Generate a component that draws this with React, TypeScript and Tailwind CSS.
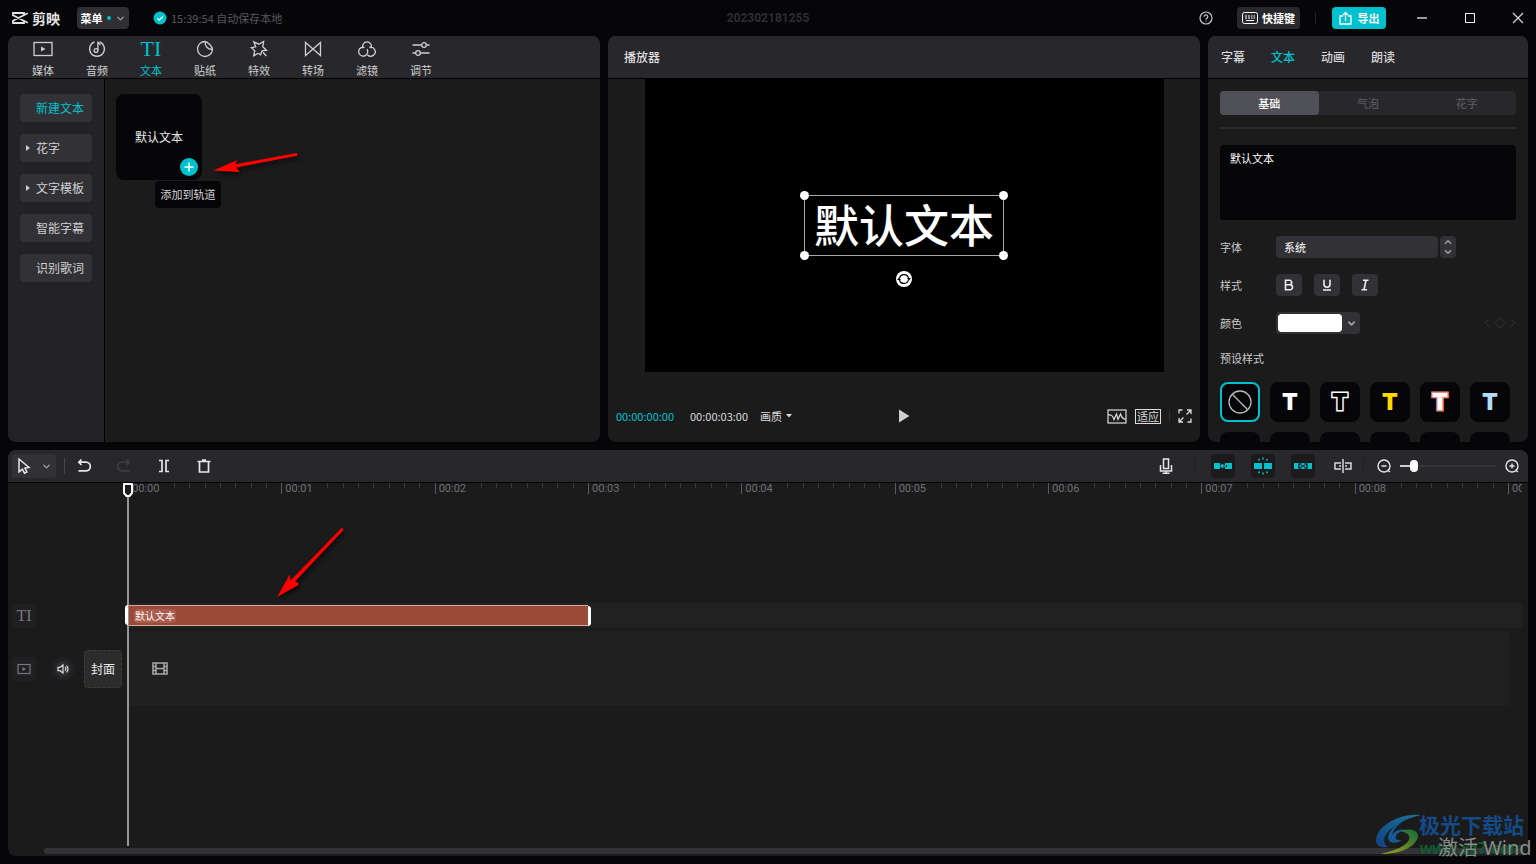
import React from 'react';
import { ChevronDown, ChevronUp } from 'lucide-react';

type IconProps = { w?: number; h?: number; box?: string; sw?: number; children: React.ReactNode };

const Icon: React.FC<IconProps> = ({ w = 18, h = 18, box, sw = 1.3, children }) => (
  <svg
    width={w}
    height={h}
    viewBox={box ?? `0 0 ${w} ${h}`}
    fill="none"
    stroke="currentColor"
    strokeWidth={sw}
    aria-hidden="true"
    className="shrink-0"
  >
    {children}
  </svg>
);

const MediaIcon = () => (
  <Icon w={20} h={18}>
    <rect x="1" y="2.5" width="18" height="13" />
    <path d="M8 6.500v5l4.500-2.500z" fill="currentColor" stroke="none" />
  </Icon>
);

const AudioIcon = () => (
  <Icon>
    <path d="M11.500 1.900A7.400 7.400 0 1 1 6.500 1.900" />
    <circle cx="8" cy="10.500" r="1.900" />
    <path d="M9.900 10.500V1.500c.2 1.700 1 2.600 2.700 3" />
  </Icon>
);

const StickerIcon = () => (
  <Icon>
    <path d="M9 1.500A7.500 7.500 0 1 0 16.500 9.500" />
    <path d="M9 1.500c0 4.800 2.200 7.600 7.500 8" />
    <path d="M9 1.500c2.500.3 7 4.500 7.500 8" />
  </Icon>
);

const EffectIcon = () => (
  <Icon>
    <path d="M8 13.200L3.800 15.800 4.700 10.800 1.300 7.600 5.700 6.800 3.800 1.800 8.800 4.200 13.600 1.500 12.800 6.800 16.500 10.200 12 10.800 10.600 14.800 8 13.200M13 12.300l3.300 3.700" />
  </Icon>
);

const TransitionIcon = () => (
  <Icon>
    <path d="M1.500 2.500v13L9 9 1.500 2.500zM16.500 2.500v13L9 9l7.500-6.500z" />
  </Icon>
);

const FilterIcon = () => (
  <Icon>
    <path d="M5.200 8.200A4.300 4.300 0 1 1 12.800 8.200M6.500 7.300a4.500 4.500 0 1 0 3 5.600c.4-1.500.2-2.600-.5-3.700" />
    <path d="M11.300 7.400a4.500 4.500 0 1 1-1.900 7.300" />
  </Icon>
);

const AdjustIcon = () => (
  <Icon>
    <path d="M.5 5h9.200M14.300 5h3.200M.5 13h3.200M8.300 13h9.200" />
    <circle cx="12" cy="5" r="2.300" />
    <circle cx="6" cy="13" r="2.300" />
  </Icon>
);

const TextGlyph = () => <span className="font-['Liberation_Serif',serif] text-[22px] leading-[18px]">TI</span>;

const TABS = [
  { label: '媒体', icon: <MediaIcon /> },
  { label: '音频', icon: <AudioIcon /> },
  { label: '文本', icon: <TextGlyph />, active: true },
  { label: '贴纸', icon: <StickerIcon /> },
  { label: '特效', icon: <EffectIcon /> },
  { label: '转场', icon: <TransitionIcon /> },
  { label: '滤镜', icon: <FilterIcon /> },
  { label: '调节', icon: <AdjustIcon /> },
];

const CATEGORIES = [
  { label: '新建文本', active: true },
  { label: '花字', expandable: true },
  { label: '文字模板', expandable: true },
  { label: '智能字幕' },
  { label: '识别歌词' },
];

const PRESETS = [
  { name: '白色', style: 'text-white' },
  { name: '描边', style: 'text-black [-webkit-text-stroke:3px_#fff] [paint-order:stroke_fill]' },
  { name: '黄色', style: 'text-[#ffd900]' },
  { name: '粉色描边', style: 'text-white [-webkit-text-stroke:3px_#f08880] [paint-order:stroke_fill]' },
  { name: '浅蓝', style: 'text-[#b4dcf8]' },
];

const SECONDS = [0, 1, 2, 3, 4, 5, 6, 7, 8, 9];

const Header = () => (
  <header className="flex h-9 shrink-0 items-center justify-between">
    <div className="flex flex-1 items-center">
      <div className="ml-1 flex items-center gap-1 text-[#e4e4e4]">
        <Icon w={16} h={12} sw={1.800}>
          <path d="M12 3V1H1v2.300l14.800 7.500M12 9v2H1V8.700L15.800 1.200" />
        </Icon>
        <span className="text-sm leading-5 font-bold">剪映</span>
      </div>
      <button className="ml-[17px] flex h-[22px] w-[52px] items-center justify-center gap-1 rounded bg-[#2f2f34] text-[11px] font-bold text-white">
        菜单
        <span className="size-1 rounded-full bg-[#00c1cd]" />
        <ChevronDown size={11} className="text-[#a0a0a3]" strokeWidth={3} />
      </button>
      <div className="ml-6 flex items-center gap-1 text-[11px] text-[#58585b]">
        <svg width="14" height="14" viewBox="0 0 14 14" aria-hidden="true">
          <circle cx="7" cy="7" r="6.500" fill="#00c1cd" />
          <path d="M4.300 7.200l2 1.900 3.500-3.600" fill="none" stroke="#fff" strokeWidth="1.300" />
        </svg>
        <span>15:39:54 自动保存本地</span>
      </div>
    </div>
    <h1 className="font-[Roboto,sans-serif] text-xs font-bold text-[#2d2d30]">202302181255</h1>
    <div className="flex flex-1 items-center justify-end">
      <button aria-label="帮助" className="text-[#c8c8c8]">
        <Icon w={14} h={14} sw={1.200}>
          <circle cx="7" cy="7" r="6" />
          <path d="M5.200 5.700a1.800 1.800 0 1 1 2.500 1.700c-.5.2-.7.5-.7 1.100M7 9.500v1.100" />
        </Icon>
      </button>
      <button className="ml-6 flex h-[22px] w-[63px] items-center justify-center gap-1 rounded bg-[#29292d] text-[11px] font-bold text-white">
        <Icon w={16} h={12} sw={1}>
          <rect x=".5" y=".5" width="15" height="11" rx="2" />
          <path d="M3 4h2M6 4h2M9 4h1.500M11.500 4H13M3 6h2M6 6h2M9 6h1.500M11.500 6H13M4 8.500h8" />
        </Icon>
        快捷键
      </button>
      <span className="mr-4 ml-[15px] h-3 w-px bg-[#242427]" />
      <button className="flex h-[22px] w-[54px] items-center justify-center gap-1.5 rounded bg-[#00c1cd] text-[11px] font-bold text-white">
        <Icon w={13} h={14} sw={1.300}>
          <path d="M4 5H1v8h11V5H9M6.500 10V1.500M4 4l2.500-2.500L9 4" />
        </Icon>
        导出
      </button>
      <button aria-label="最小化" className="ml-7 flex w-4 justify-center text-[#9a9a9a]">
        <Icon w={12} h={12} sw={2}>
          <path d="M1 6h10" />
        </Icon>
      </button>
      <button aria-label="最大化" className="ml-8 flex w-4 justify-center text-[#ececec]">
        <Icon w={12} h={12} sw={1}>
          <rect x="1.500" y="1.500" width="9" height="9" />
        </Icon>
      </button>
      <button aria-label="关闭" className="mr-0.5 ml-8 flex w-4 justify-center text-[#d8d8d8]">
        <Icon w={12} h={12} sw={1.200}>
          <path d="M1 1l10 10M11 1L1 11" />
        </Icon>
      </button>
    </div>
  </header>
);

const MaterialPanel = () => (
  <section className="flex min-w-0 flex-1 flex-col overflow-hidden rounded-lg bg-[#1b1b1c]">
    <nav className="flex h-[43px] shrink-0 border-b border-black bg-[#28282c] pl-2">
      {TABS.map((tab) => (
        <button
          key={tab.label}
          className={`flex w-[54px] flex-col items-center gap-1 pt-1 text-[11px] leading-4 ${tab.active ? 'text-[#00c1cd]' : 'text-[#cfcfd1]'}`}
        >
          {tab.icon}
          {tab.label}
        </button>
      ))}
    </nav>
    <div className="flex flex-1">
      <aside className="flex w-[97px] flex-col gap-3 border-r border-black bg-[#232325] px-3 py-[15px]">
        {CATEGORIES.map((item) => (
          <button
            key={item.label}
            className={`flex h-7 w-[72px] items-center rounded bg-[#323236] text-xs ${item.active ? 'text-[#00c1cd]' : 'text-[#d0d0d2]'}`}
          >
            <span className="flex w-4 justify-center">
              {item.expandable && (
                <svg width="4" height="6" viewBox="0 0 4 6" fill="currentColor" aria-hidden="true">
                  <path d="M0 0l4 3-4 3z" />
                </svg>
              )}
            </span>
            {item.label}
          </button>
        ))}
      </aside>
      <div className="px-[11px] py-[15px]">
        <div className="relative flex size-[86px] items-center justify-center rounded-lg bg-[#060608] text-xs text-[#e8e8e8]">
          默认文本
          <button
            aria-label="添加到轨道"
            className="absolute right-1 bottom-1 flex size-[18px] items-center justify-center rounded-full bg-[#00c1cd] text-white"
          >
            <Icon w={10} h={10} sw={1.500}>
              <path d="M5 .5v9M.5 5h9" />
            </Icon>
          </button>
          <div
            role="tooltip"
            className="absolute top-[87px] left-[39px] flex h-[27px] w-[66px] items-center justify-center rounded-sm bg-[#060608] text-[11px] whitespace-nowrap text-[#d6d6d6]"
          >
            添加到轨道
          </div>
          <svg
            className="absolute top-14 left-24 drop-shadow-[2px_3px_2px_rgba(0,0,0,0.6)]"
            width="90"
            height="26"
            viewBox="0 0 90 26"
            aria-hidden="true"
          >
            <path d="M1 20.500L25 10.300 23.500 14.200 84.500 3q1.500.5.5 2.800L24.500 17.500 27.500 22z" fill="#fe0000" />
          </svg>
        </div>
      </div>
    </div>
  </section>
);

const Player = () => (
  <section className="flex min-w-0 flex-1 flex-col overflow-hidden rounded-lg bg-[#1b1b1c]">
    <h2 className="flex h-[43px] shrink-0 items-center border-b border-black bg-[#28282c] px-4 text-xs font-medium text-[#dedede]">
      播放器
    </h2>
    <div className="flex min-h-0 flex-1 justify-center">
      <div className="flex aspect-[519/293] h-full items-center justify-center bg-black">
        <div className="relative flex h-[61px] w-[200px] items-center justify-center border border-[#a8a8a8] pb-1">
          <span className="text-[45px] leading-[56px] font-medium whitespace-nowrap text-white">默认文本</span>
          <span className="absolute -top-[5px] -left-[5px] size-[9px] rounded-full bg-white" />
          <span className="absolute -top-[5px] -right-[5px] size-[9px] rounded-full bg-white" />
          <span className="absolute -bottom-[5px] -left-[5px] size-[9px] rounded-full bg-white" />
          <span className="absolute -right-[5px] -bottom-[5px] size-[9px] rounded-full bg-white" />
          <button aria-label="旋转" className="absolute top-[75px] left-[91px] rounded-full bg-white text-black">
            <Icon w={16} h={16} sw={1.200}>
              <path d="M3.500 7.500a4.600 4.600 0 0 1 9-.5M12.500 8.500a4.600 4.600 0 0 1-9 .5" />
              <path d="M11 7h4l-2 2.500zM5 9H1l2-2.500z" fill="currentColor" stroke="none" />
            </Icon>
          </button>
        </div>
      </div>
    </div>
    <div className="flex h-[70px] shrink-0 items-center px-2 pt-[18px] text-[11px] text-[#dcdcdc]">
      <div className="flex flex-1 items-center">
        <span className="text-[#00c1cd]">00:00:00:00</span>
        <span className="ml-4">00:00:03:00</span>
        <button className="ml-3 flex items-center gap-1">
          画质
          <svg width="6" height="4" viewBox="0 0 6 4" fill="currentColor" aria-hidden="true">
            <path d="M0 0h6L3 3.500z" />
          </svg>
        </button>
      </div>
      <button aria-label="播放" className="text-[#d0d0d0]">
        <svg width="12" height="14" viewBox="0 0 12 14" fill="currentColor" aria-hidden="true">
          <path d="M1 .5v13L11.500 7z" />
        </svg>
      </button>
      <div className="flex flex-1 items-center justify-end">
        <button aria-label="示波器">
          <Icon w={20} h={15} sw={1.200}>
            <rect x="1" y="1" width="18" height="13" />
            <path d="M1 6c3-.5 4.500 0 6 4.500L9.500 5l1.500 5.500L13.500 5c1 3.500 2 5 5.500 5.500" />
          </Icon>
        </button>
        <button className="ml-2 flex h-[15px] w-[26px] items-center justify-center border border-[#dcdcdc] text-[11px] leading-3">
          适应
        </button>
        <span className="mx-2 h-2.5 w-px bg-[#303033]" />
        <button aria-label="全屏">
          <Icon w={14} h={14} sw={1.300}>
            <path d="M1 4.500V1h3.500M13 9.500V13H9.500M9 1h4v4M13 1L8.500 5.500M5 13H1V9M1 13l4.500-4.500" />
          </Icon>
        </button>
      </div>
    </div>
  </section>
);

const STYLE_BUTTON = 'flex h-[22px] w-[26px] items-center justify-center rounded bg-[#323236] text-[#f0f0f0]';

const Inspector = () => (
  <section className="flex w-80 shrink-0 flex-col overflow-hidden rounded-lg bg-[#1b1b1c]">
    <nav className="flex h-[43px] shrink-0 items-center gap-[26px] border-b border-black bg-[#28282c] px-[13px] text-xs font-medium text-[#d6d6d8]">
      <button>字幕</button>
      <button className="text-[#00c1cd]">文本</button>
      <button>动画</button>
      <button>朗读</button>
    </nav>
    <div className="flex min-h-0 flex-1 flex-col overflow-hidden px-3 pt-3 text-[11px] text-[#cacacc]">
      <div className="grid h-6 shrink-0 grid-cols-3 rounded bg-[#28282c] text-[#606064]">
        <button className="rounded bg-[#505156] font-medium text-white">基础</button>
        <button>气泡</button>
        <button>花字</button>
      </div>
      <hr className="mt-3 shrink-0 border-t-2 border-[#29292b]" />
      <textarea
        aria-label="文本内容"
        defaultValue="默认文本"
        className="mt-4 h-[75px] shrink-0 resize-none rounded bg-[#060608] px-2.5 py-[5px] leading-4 text-white outline-none"
      />
      <div className="mt-4 flex h-[22px] shrink-0 items-center">
        <label htmlFor="font" className="w-14">
          字体
        </label>
        <select id="font" className="h-[22px] w-[162px] appearance-none rounded bg-[#323236] px-2 text-white outline-none">
          <option>系统</option>
        </select>
        <button aria-label="切换字体" className="ml-0.5 flex h-[22px] w-4 flex-col items-center justify-center rounded bg-[#323236] text-[#9c9c9e]">
          <ChevronUp size={10} strokeWidth={4} />
          <ChevronDown size={10} strokeWidth={4} />
        </button>
      </div>
      <div className="mt-4 flex h-[22px] shrink-0 items-center">
        <span className="w-14">样式</span>
        <div className="flex gap-3">
          <button aria-label="加粗" className={STYLE_BUTTON}>
            <Icon w={10} h={12} sw={1.600}>
              <path d="M1.500 1.300h4a2.200 2.200 0 0 1 0 4.400h-4zM1.500 5.700h4.500a2.500 2.500 0 0 1 0 5H1.500z" />
            </Icon>
          </button>
          <button aria-label="下划线" className={STYLE_BUTTON}>
            <Icon w={10} h={12} sw={1.600}>
              <path d="M2 .8v4.500a3 3 0 0 0 6 0V.8M1 11h8" />
            </Icon>
          </button>
          <button aria-label="斜体" className={STYLE_BUTTON}>
            <Icon w={10} h={12} sw={1.600}>
              <path d="M3 1.300h5.500M1.500 10.700H7M6 1.300L4 10.700" />
            </Icon>
          </button>
        </div>
      </div>
      <div className="mt-4 flex h-[22px] shrink-0 items-center">
        <label htmlFor="color" className="w-14">
          颜色
        </label>
        <div className="flex h-[22px] w-[84px] items-center rounded bg-[#323236] pl-0.5">
          <input
            id="color"
            type="color"
            defaultValue="#ffffff"
            className="h-[18px] w-16 appearance-none rounded-sm bg-white p-0 [&::-webkit-color-swatch]:rounded-sm [&::-webkit-color-swatch]:border-0 [&::-webkit-color-swatch-wrapper]:p-0"
          />
          <span className="flex flex-1 justify-center text-[#a0a0a2]">
            <ChevronDown size={11} strokeWidth={4} />
          </span>
        </div>
        <div className="ml-auto text-[#29292b]">
          <Icon w={32} h={12} sw={1.300}>
            <path d="M5 2L1 6l4 4M16 1l5 5-5 5-5-5zM27 2l4 4-4 4" />
          </Icon>
        </div>
      </div>
      <h3 className="mt-4 shrink-0 leading-4">预设样式</h3>
      <div className="mt-4 flex shrink-0 flex-wrap gap-2.5">
        <button
          aria-label="无样式"
          className="flex size-10 items-center justify-center rounded-lg border-2 border-[#00c1cd] bg-[#060608] text-[#b8b8b8]"
        >
          <Icon w={24} h={24} sw={1.300}>
            <circle cx="12" cy="12" r="11" />
            <path d="M4.300 4.300l15.400 15.400" />
          </Icon>
        </button>
        {PRESETS.map((preset) => (
          <button
            key={preset.name}
            aria-label={preset.name}
            className={`flex size-10 items-center justify-center rounded-lg bg-[#060608] font-[Inter,sans-serif] text-[23px] leading-6 font-black ${preset.style}`}
          >
            T
          </button>
        ))}
        {[1, 2, 3, 4, 5, 6].map((n) => (
          <button key={n} aria-label={`更多样式 ${n}`} className="size-10 rounded-lg bg-[#060608]" />
        ))}
      </div>
    </div>
  </section>
);

const TOOL = 'flex size-6 items-center justify-center rounded';

const TimelineToolbar = () => (
  <div className="flex h-[33px] shrink-0 items-center justify-between border-b border-black bg-[#28282c] px-1 text-[#e6e6e6]">
    <div className="flex items-center">
      <button aria-label="选择工具" className="flex h-6 w-11 items-center justify-between rounded bg-[#323236] px-1">
        <Icon w={16} h={18} sw={1.500}>
          <path d="M3 2v13l3.300-2.800 2.200 4 2.400-1.200-2-4 4.100-.6z" />
        </Icon>
        <ChevronDown size={11} strokeWidth={3} className="text-[#a0a0a2]" />
      </button>
      <span className="mr-[7px] ml-2 h-4 w-px bg-[#47474b]" />
      <div className="flex gap-4">
        <button aria-label="撤销" className={TOOL}>
          <Icon w={14} h={14} sw={1.700}>
            <path d="M4.500 .5L1.800 3.200 4.500 6M2 3.200H9a4.300 4.300 0 0 1 0 8.600H1.500" />
          </Icon>
        </button>
        <button aria-label="重做" disabled className={`${TOOL} text-[#3d3d41]`}>
          <Icon w={14} h={14} sw={1.700}>
            <path d="M9.500 .5l2.700 2.700L9.500 6M12 3.200H5a4.300 4.300 0 0 0 0 8.600h7.500" />
          </Icon>
        </button>
        <button aria-label="分割" className={TOOL}>
          <Icon w={12} h={14} sw={1.700}>
            <path d="M1 1.500h3v11H1M11 1.500H8v11h3" />
          </Icon>
        </button>
        <button aria-label="删除" className={TOOL}>
          <Icon w={14} h={14} sw={1.700}>
            <path d="M.5 2.500h13M2.500 2.500v10.500h9V2.500M5 1h4" />
          </Icon>
        </button>
      </div>
    </div>
    <div className="flex items-center">
      <button aria-label="录音" className={TOOL}>
        <Icon w={14} h={16} sw={1.500}>
          <rect x="4.500" y="1" width="5" height="9.500" />
          <path d="M1.500 7v6h11V7M7 13v2.300M3.500 15.300h7" />
        </Icon>
      </button>
      <span className="mx-4 h-4 w-px bg-[#1f1f22]" />
      <div className="flex gap-4 text-[#00c1cd]">
        <button aria-label="主轨磁吸" className={`${TOOL} bg-[#1b1b1c]`}>
          <Icon w={20} h={18}>
            <rect x="1" y="6" width="6" height="6" fill="currentColor" stroke="none" />
            <path d="M10 7L8 9l2 2M8 9h5" />
            <path d="M12 6h7v6h-7v-2h2V8h-2z" fill="currentColor" stroke="none" />
          </Icon>
        </button>
        <button aria-label="自动吸附" className={`${TOOL} bg-[#1b1b1c]`}>
          <Icon w={20} h={18} sw={1.500}>
            <path d="M1 6h8v6H1zM11 6h8v6h-8z" fill="currentColor" stroke="none" />
            <path d="M10 .5v2M5.500 2l1 1.500M14.500 2l-1 1.500M10 17.500v-2M5.500 16l1-1.500M14.500 16l-1-1.500" />
          </Icon>
        </button>
        <button aria-label="联动" className={`${TOOL} bg-[#1b1b1c]`}>
          <Icon w={20} h={18}>
            <path d="M1 6h18v6H1z" fill="currentColor" stroke="none" />
            <path d="M8.500 7H6v4h2.500M11.500 7H14v4h-2.500M8 9h4" stroke="#1b1b1c" />
          </Icon>
        </button>
        <button aria-label="预览轴" className={`${TOOL} text-[#d8d8d8]`}>
          <Icon w={18} h={14} sw={1.500}>
            <path d="M7 4H1v6h6M11 4h6v6h-6M5 7h2M11 7h2M9 0v14" />
          </Icon>
        </button>
      </div>
      <span className="mx-2 h-4 w-px bg-[#1f1f22]" />
      <button aria-label="缩小" className={TOOL}>
        <Icon w={14} h={14} sw={1.400}>
          <circle cx="7" cy="7" r="6" />
          <path d="M4.500 7h5M10.500 11l2.500 2" />
        </Icon>
      </button>
      <input
        type="range"
        aria-label="时间线缩放"
        min={0}
        max={100}
        defaultValue={11}
        className="mx-1 h-3 w-24 appearance-none bg-[linear-gradient(to_right,#d0d0d0_12px,#343438_12px)] bg-[length:100%_2px] bg-center bg-no-repeat [&::-webkit-slider-thumb]:h-3 [&::-webkit-slider-thumb]:w-2 [&::-webkit-slider-thumb]:appearance-none [&::-webkit-slider-thumb]:rounded-sm [&::-webkit-slider-thumb]:bg-white"
      />
      <button aria-label="放大" className={TOOL}>
        <Icon w={14} h={14} sw={1.400}>
          <circle cx="7" cy="7" r="6" />
          <path d="M4.500 7h5M7 4.500v5M10.500 11l2.500 2" />
        </Icon>
      </button>
    </div>
  </div>
);

const Ruler = () => (
  <div className="ml-[120px] flex h-3 overflow-hidden font-[Roboto,sans-serif] text-[11px] text-[#707073]">
    {SECONDS.map((s) => (
      <div key={s} className="flex w-[11%] shrink-0">
        <span className="h-[11px] w-1/5 shrink-0 border-l border-[#5c5c5e] pl-[3px] leading-[11px]">{`00:0${s}`}</span>
        {[2, 3, 4, 5, 6, 7, 8, 9].map((t) => (
          <span key={t} className={`h-[5px] w-1/10 ${t === 2 ? '' : 'border-l border-[#3a3a3c]'}`} />
        ))}
      </div>
    ))}
  </div>
);

const Timeline = () => (
  <section className="flex min-h-0 flex-1 flex-col overflow-hidden rounded-lg bg-[#1b1b1c]">
    <TimelineToolbar />
    <div className="relative flex flex-1 flex-col pr-1.5 pb-0.5">
      <Ruler />

      <div className="mt-[108px] flex h-[25px] items-center">
        <div className="flex w-[120px] shrink-0 pl-1">
          <span className="flex size-6 items-center justify-center rounded bg-[#202022] font-['Liberation_Serif',serif] text-base text-[#77777a]">
            TI
          </span>
        </div>
        <div className="flex h-full flex-1 items-center bg-[#212122]">
          <div className="flex h-[21px] w-[33%] items-center border-y border-[#dca79d] bg-[#9c4a38] pl-1.5">
            <span className="rounded-sm bg-[#a75c4c] px-px text-[10px] leading-[14px] text-white">默认文本</span>
            <span className="-mr-[3px] ml-auto h-5 w-[3px] rounded-r bg-white" />
          </div>
        </div>
      </div>

      <div className="mt-[3px] flex h-[75px] items-center">
        <div className="flex w-[120px] shrink-0 items-center pl-1">
          <span className="flex size-6 items-center justify-center rounded bg-[#202022] text-[#77777a]">
            <Icon w={14} h={12} sw={1.200}>
              <rect x="1" y="1.500" width="12" height="9" />
              <path d="M5.500 4v4L9 6z" fill="currentColor" stroke="none" />
            </Icon>
          </span>
          <button aria-label="静音" className="ml-[15px] flex size-6 items-center justify-center rounded-full border-4 border-[#202022] bg-[#2b2b2d] text-[#dcdcdc]">
            <Icon w={12} h={12} sw={1.200}>
              <path d="M1 4.300h2L6 2v8L3 7.700H1zM8 4.200c.9 1 .9 2.600 0 3.600M9.500 2.700c1.800 2 1.800 4.600 0 6.600" />
            </Icon>
          </button>
          <button className="ml-[9px] size-[38px] rounded border border-dashed border-[#3c3c3e] bg-[#2c2c2d] text-xs text-[#ececec]">
            封面
          </button>
        </div>
        <div className="mr-3 flex h-full flex-1 items-center rounded bg-[#202021] pl-6 text-[#a8a8a8]">
          <Icon w={16} h={13} sw={1.500}>
            <path d="M1 1h14v11H1zM4 1v11M12 1v11M4 6.500h8M1 4.500h3M1 8.500h3M12 4.500h3M12 8.500h3" />
          </Icon>
        </div>
      </div>

      <div className="mt-auto ml-9 h-1.5 rounded-full bg-[#343438]" />

      {/* playhead */}
      <div className="absolute top-0 bottom-2.5 left-[119px] w-0.5 bg-[#969696]" />
      <span className="absolute top-[122px] left-[117px] h-5 w-[3px] rounded-l bg-white" />
      <svg className="absolute top-0 left-[115px]" width="10" height="15" viewBox="0 0 10 15" aria-hidden="true">
        <path d="M1 1h8v9l-2.500 3h-3L1 10z" fill="#1b1b1c" stroke="#fff" strokeWidth="2" strokeLinejoin="round" />
      </svg>
      <svg
        className="absolute top-10 left-[265px] drop-shadow-[2px_3px_2px_rgba(0,0,0,0.6)]"
        width="76"
        height="78"
        viewBox="0 0 76 78"
        aria-hidden="true"
      >
        <path d="M4 74L16.500 52 17.500 57.500 68.500 5q2 0 2 2L22 58.500 25.500 60v2z" fill="#fe0000" />
      </svg>
    </div>
  </section>
);

const Watermark = () => (
  <div className="pointer-events-none absolute right-0 bottom-0 h-[52px] w-[160px] overflow-hidden whitespace-nowrap">
    <svg className="absolute top-0 left-0" width="46" height="44" viewBox="0 0 46 44" aria-hidden="true">
      <defs>
        <linearGradient id="swirlBlue" x1="1" y1="0" x2="0" y2="1">
          <stop offset="0" stopColor="#1c7896" />
          <stop offset="1" stopColor="#123f86" />
        </linearGradient>
        <linearGradient id="swirlGreen" x1="1" y1="0" x2="0" y2="1">
          <stop offset="0" stopColor="#116a3a" />
          <stop offset="1" stopColor="#a5a01c" />
        </linearGradient>
      </defs>
      <path d="M45 3C25 1 3 12 0 27c-1 7 6 9 12 8-5-3-5-9 0-15C19 12 32 6 45 3z" fill="url(#swirlBlue)" />
      <path d="M38 3C24 8 12 18 12 26c1 6 9 6 14 2-6 1-8-2-5-6 3-3 8-4 11-3-6-3-13-1-16 4 2-8 11-15 22-20z" fill="#155a94" />
      <path d="M24 19c9-3 18-2 18 5-1 9-14 18-37 18 12-3 24-7 28-14 2-5-3-8-9-9z" fill="url(#swirlGreen)" />
    </svg>
    <span className="absolute top-0 left-[43px] text-[21px] leading-6 font-bold text-[#144a85]">极光下载站</span>
    <span className="absolute top-[27px] left-[44px] font-['Liberation_Sans',sans-serif] text-base leading-5 font-bold text-[#0f5c2e]">
      www.xz7.com
    </span>
    <span className="absolute top-[22px] left-[62px] font-['Noto_Sans','Noto_Sans_CJK_SC',sans-serif] text-[20px] leading-7 text-[#8a8a8a]">
      激活 Wind
    </span>
  </div>
);

export default function App() {
  return (
    <div className="relative flex h-screen flex-col overflow-hidden bg-[#060608] px-2 pb-2 font-['Noto_Sans_CJK_SC',sans-serif]">
      <Header />
      <main className="flex min-h-0 flex-1 flex-col gap-2">
        <div className="flex min-h-0 flex-1 gap-2">
          <MaterialPanel />
          <Player />
          <Inspector />
        </div>
        <Timeline />
      </main>
      <Watermark />
    </div>
  );
}
